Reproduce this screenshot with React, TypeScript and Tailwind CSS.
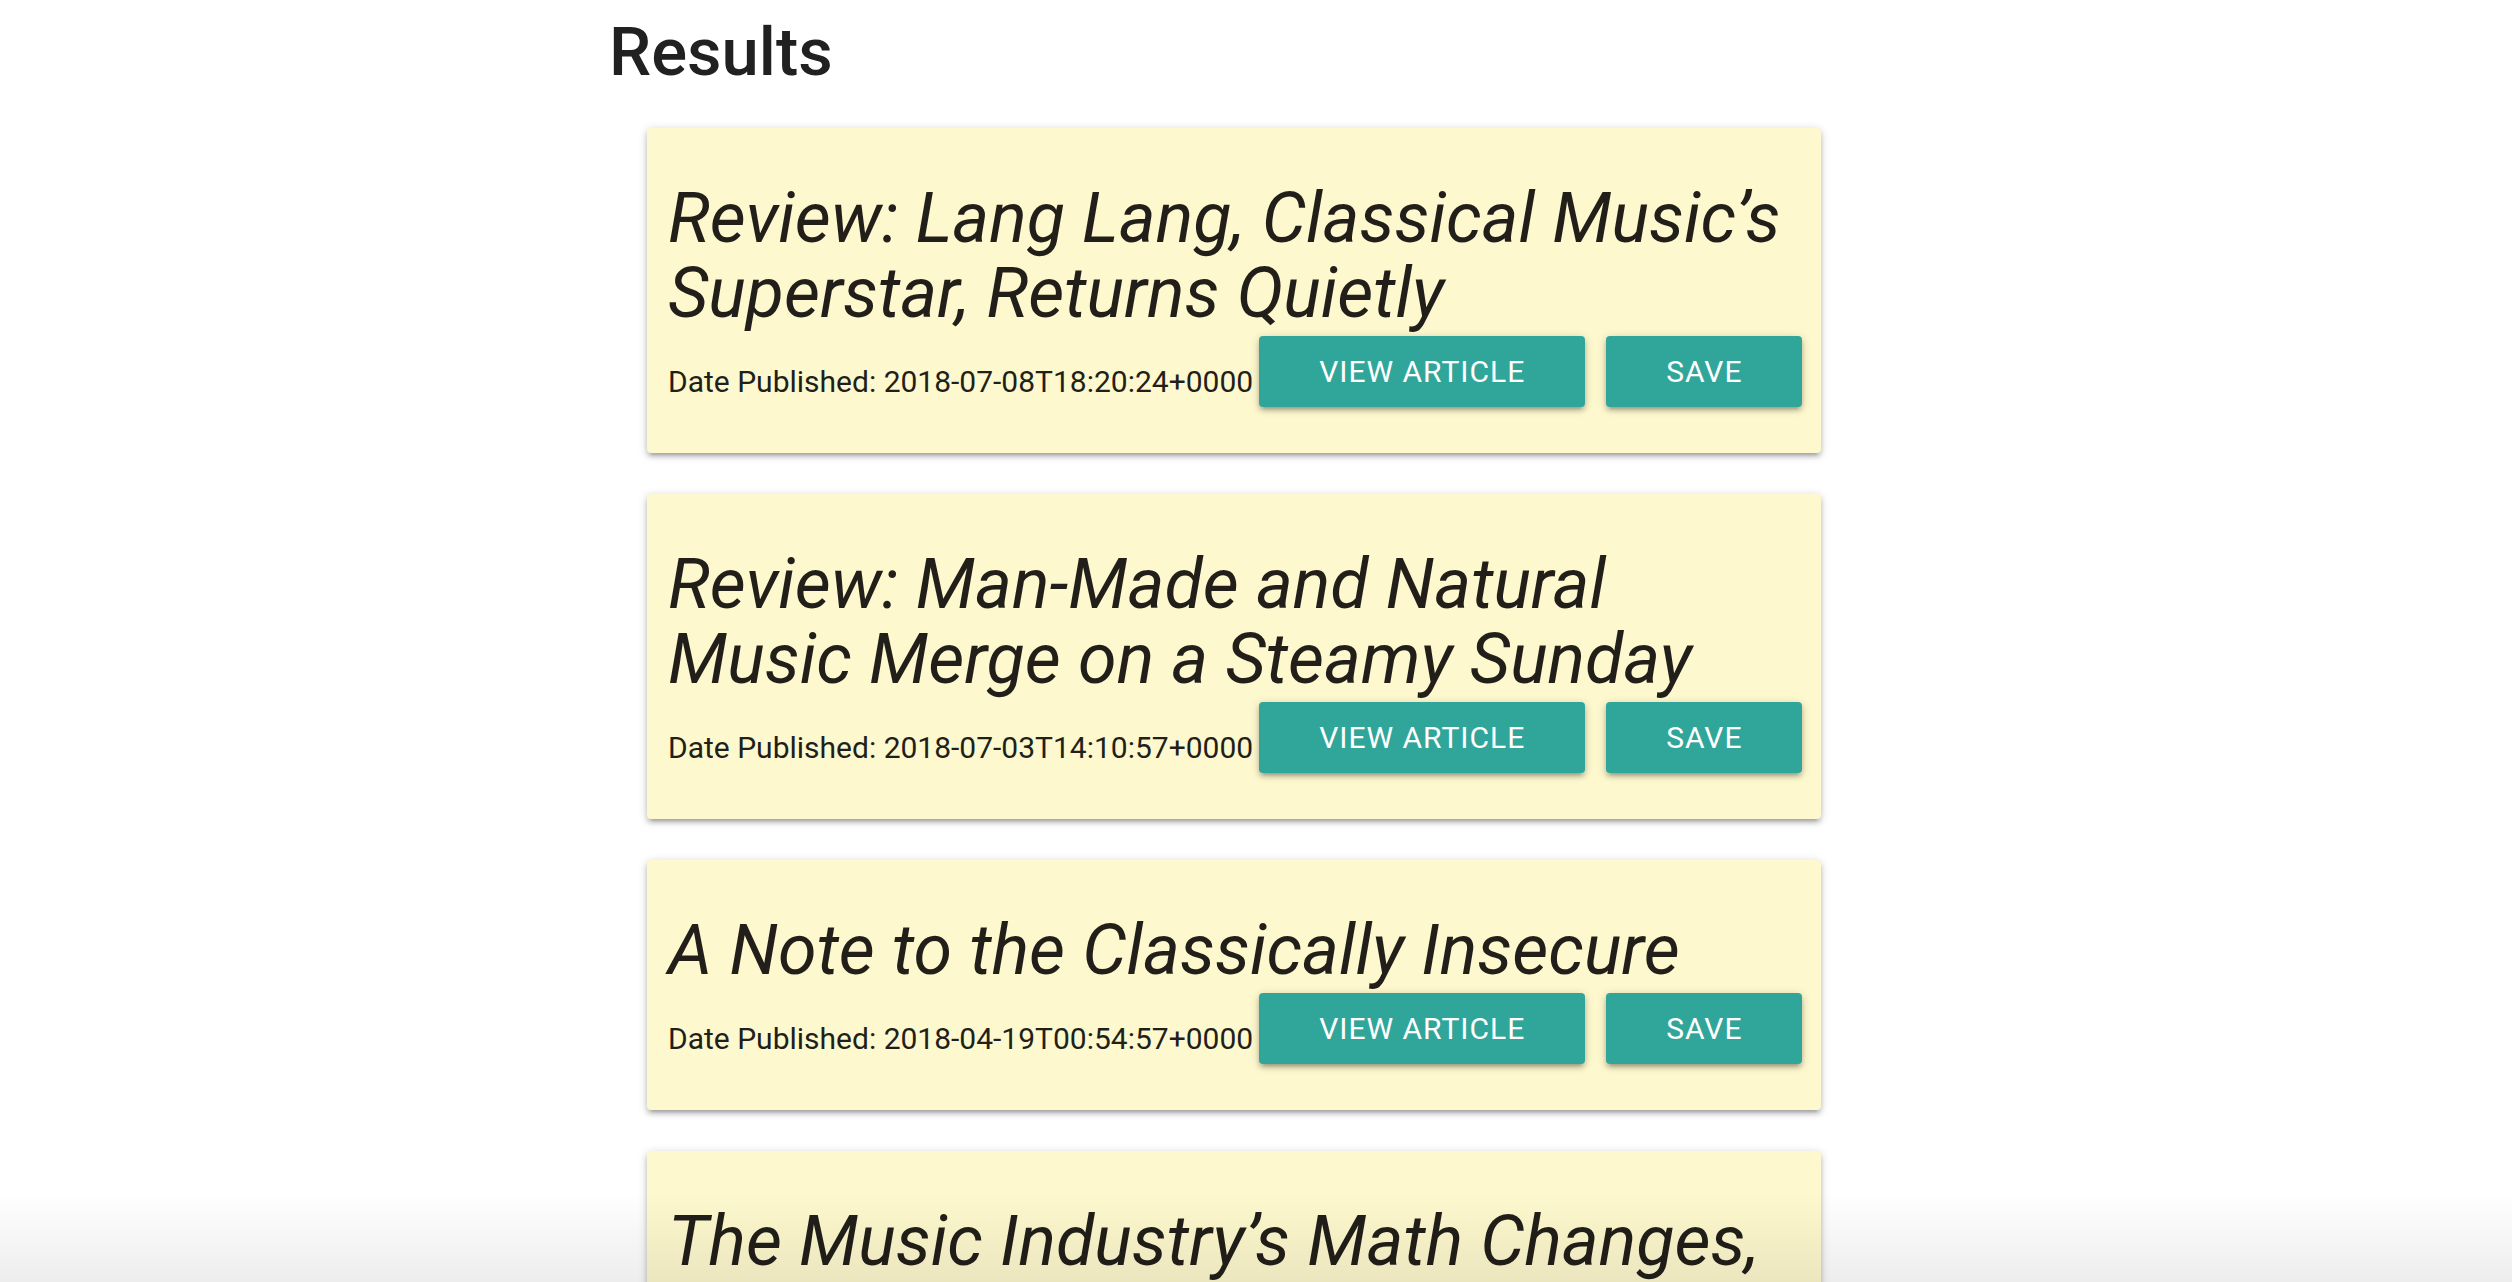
const articles = [
  {
    id: "lang-lang",
    headline: "Review: Lang Lang, Classical Music’s Superstar, Returns Quietly",
    date: "2018-07-08T18:20:24+0000",
  },
  {
    id: "man-made",
    headline: "Review: Man-Made and Natural Music Merge on a Steamy Sunday",
    date: "2018-07-03T14:10:57+0000",
  },
  {
    id: "classically-insecure",
    headline: "A Note to the Classically Insecure",
    date: "2018-04-19T00:54:57+0000",
  },
  {
    id: "industry-math",
    headline: "The Music Industry’s Math Changes, and So Does Its Sound",
    date: "2018-03-28T09:00:11+0000",
  },
];

const shadow =
  "shadow-[0_4px_4px_0_rgba(0,0,0,0.14),0_6px_2px_-4px_rgba(0,0,0,0.12),0_2px_10px_0_rgba(0,0,0,0.2)]";

function ArticleCard({ headline, date }: { headline: string; date: string }) {
  return (
    <div
      className={`rounded-[4px] bg-[#fdf8cd] pl-[21px] pr-[20px] pt-[53px] pb-[46px] ${shadow}`}
    >
      <h4 className="mb-[5px] text-[70px] leading-[75px] font-normal italic text-[#221f1a]">
        {headline}
      </h4>
      <div className="flex items-end whitespace-nowrap">
        <span className="mb-[3px] text-[30px] leading-[45px] text-[#221f1a]">
          Date Published: {date}
        </span>
        <button
          className={`ml-[6px] h-[71px] rounded-[4px] bg-[#30a69a] px-[60px] text-[30px] tracking-[1px] text-white ${shadow}`}
        >
          VIEW ARTICLE
        </button>
        <button
          className={`ml-[21px] h-[71px] rounded-[4px] bg-[#30a69a] px-[60px] text-[30px] tracking-[1px] text-white ${shadow}`}
        >
          SAVE
        </button>
      </div>
    </div>
  );
}

export default function App() {
  return (
    <div className="relative h-[1282px] overflow-hidden bg-white font-['Roboto',sans-serif]">
      <div className="pl-[609px] pt-[17px]">
        <h3 className="text-[67px] leading-[70px] font-medium text-[#212121]">
          Results
        </h3>
        <div className="mt-[41px] ml-[38px] flex w-[1174px] flex-col gap-[41px]">
          {articles.map((a) => (
            <ArticleCard key={a.id} headline={a.headline} date={a.date} />
          ))}
        </div>
      </div>
      <div className="pointer-events-none fixed inset-x-0 bottom-0 h-[90px] bg-gradient-to-b from-transparent to-black/[0.07]" />
    </div>
  );
}
